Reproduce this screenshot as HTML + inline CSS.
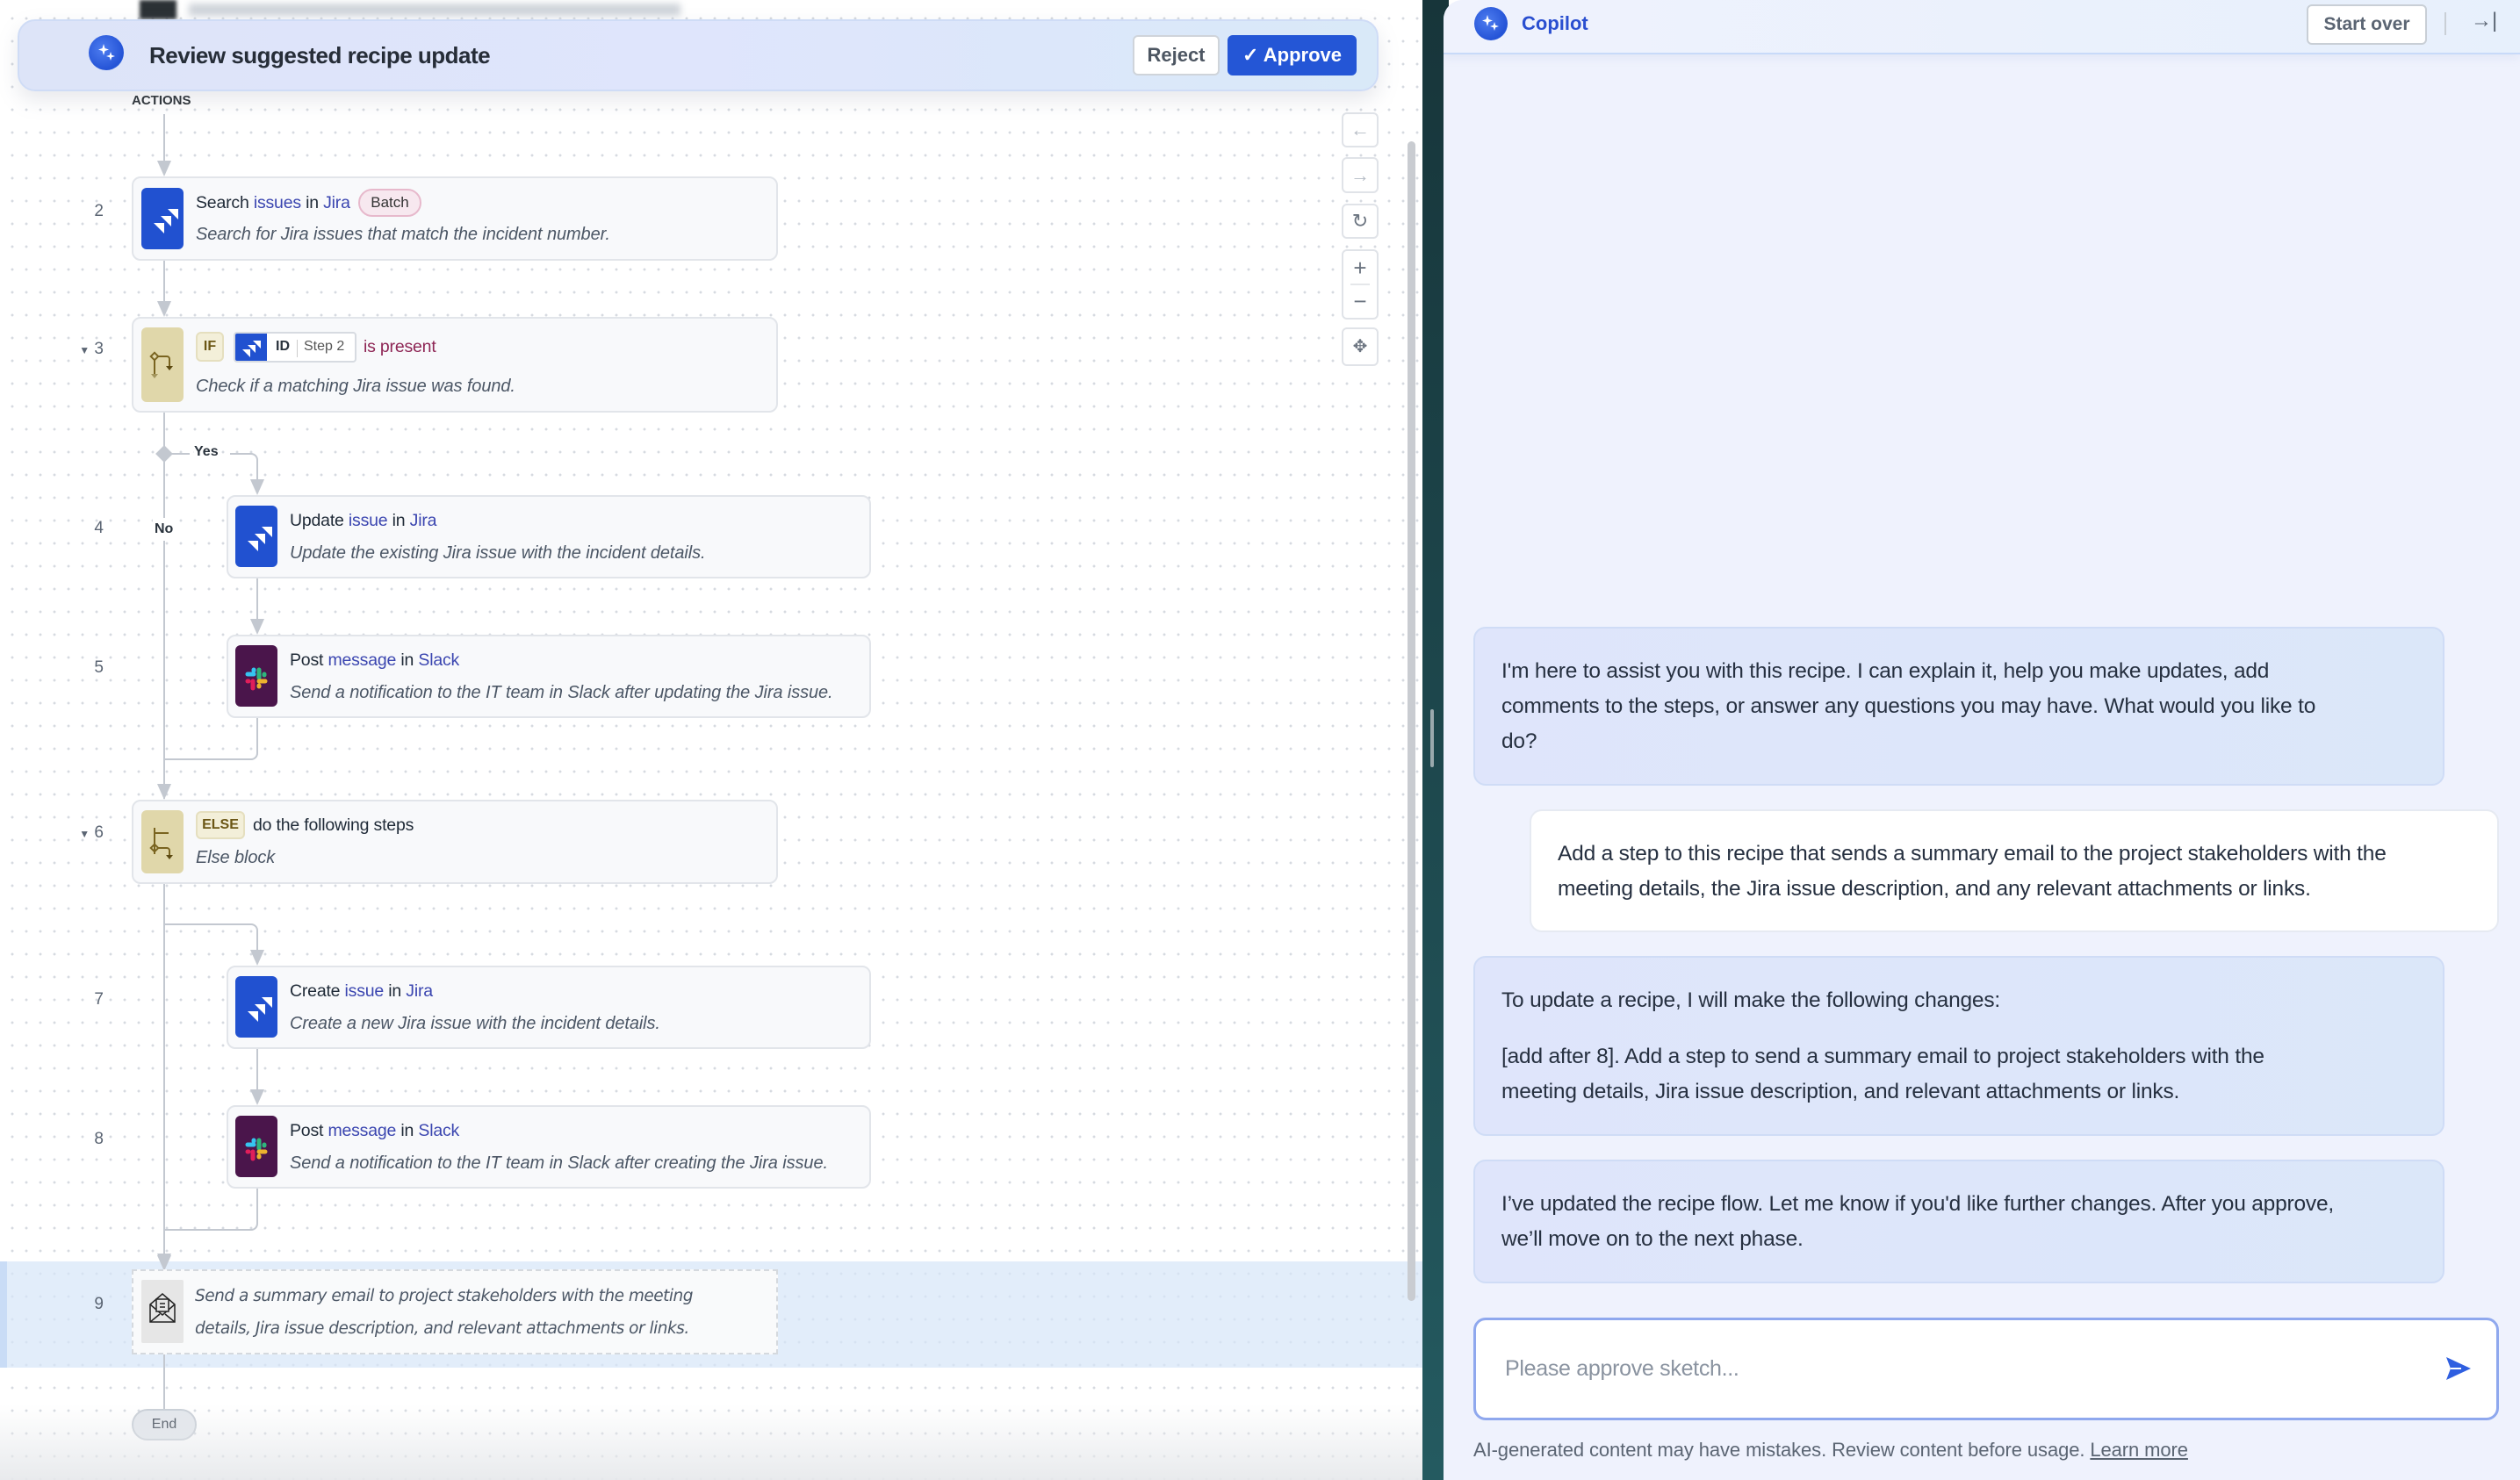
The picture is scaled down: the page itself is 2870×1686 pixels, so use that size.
<!DOCTYPE html>
<html><head><meta charset="utf-8">
<style>
*{box-sizing:border-box;margin:0;padding:0}
body{width:2870px;height:1686px;overflow:hidden;position:relative;font-family:"Liberation Sans",sans-serif;background:#fff;color:#1f2a37}
.abs{position:absolute}
#left{position:absolute;left:0;top:0;width:1620px;height:1686px;background-color:#fff;
 background-image:radial-gradient(circle,#d6dae0 1.3px,transparent 1.6px);background-size:16px 26px;background-position:6px 8px;overflow:hidden}
.vl{position:absolute;background:#c3c8d0;width:2px}
.hl{position:absolute;background:#c3c8d0;height:2px}
.arr{position:absolute;width:0;height:0;border-left:8px solid transparent;border-right:8px solid transparent;border-top:18px solid #c3c8d0}
.card{position:absolute;background:#f8f9fb;border:2px solid #e2e5ea;border-radius:10px}
.num{position:absolute;font-size:19px;color:#5b6573;width:40px;text-align:right}
.ico{position:absolute;border-radius:6px}
.t{position:absolute;font-size:19.5px;color:#1f2a37;white-space:nowrap;letter-spacing:-0.2px}
.t b{font-weight:normal;color:#3b46b0}
.d{position:absolute;font-size:20px;font-style:italic;color:#4c5766;white-space:nowrap;letter-spacing:-0.1px}
.jira{background:#2151d0}
.slack{background:#4a154b}
.tan{background:#e0d7aa}
.ctl{position:absolute;left:1528px;width:42px;background:#fff;border:2px solid #e0e3e8;border-radius:6px;color:#6b7480;text-align:center;font-size:22px}
#right{position:absolute;left:1644px;top:0;width:1226px;height:1686px;background:#eff2fd;border-top-left-radius:22px;overflow:hidden}
.bub{position:absolute;border-radius:14px;background:linear-gradient(90deg,#dfe5fb,#dbe7f9);border:2px solid #cfdcf6;font-size:24.5px;line-height:40px;color:#263040;letter-spacing:-0.2px;padding:0 0 0 30px;white-space:nowrap}
</style></head><body>
<div id="left">
 <div class="abs" style="left:159px;top:0;width:42px;height:22px;background:#2b3135;filter:blur(2px)"></div>
 <div class="abs" style="left:215px;top:4px;width:560px;height:14px;background:#cfd4da;filter:blur(4px)"></div>
 <div class="abs" style="left:150px;top:106px;font-size:15px;font-weight:bold;color:#2b3135">ACTIONS</div>

 <div class="vl" style="left:186px;top:130px;height:62px"></div><div class="arr" style="left:179px;top:183px"></div>
 <div class="vl" style="left:186px;top:297px;height:56px"></div><div class="arr" style="left:179px;top:343px"></div>
 <div class="vl" style="left:186px;top:470px;height:440px"></div><div class="arr" style="left:179px;top:893px"></div>
 <div class="abs" style="left:180px;top:510px;width:14px;height:14px;background:#c3c8d0;transform:rotate(45deg)"></div>
 <div class="hl" style="left:194px;top:516px;width:22px"></div>
 <div class="abs" style="left:221px;top:506px;font-size:16px;font-weight:bold;color:#2a333d;background:#fff">Yes</div>
 <div class="hl" style="left:262px;top:516px;width:24px"></div>
 <div class="abs" style="left:284px;top:516px;width:10px;height:10px;border-top:2px solid #c3c8d0;border-right:2px solid #c3c8d0;border-top-right-radius:8px"></div>
 <div class="vl" style="left:292px;top:524px;height:34px"></div><div class="arr" style="left:285px;top:546px"></div>
 <div class="abs" style="left:174px;top:590px;font-size:16px;font-weight:bold;color:#2a333d;background:#fff;padding:4px 2px">No</div>
 <div class="vl" style="left:292px;top:659px;height:56px"></div><div class="arr" style="left:285px;top:705px"></div>
 <div class="vl" style="left:292px;top:818px;height:38px"></div>
 <div class="abs" style="left:186px;top:854px;width:108px;height:12px;border-bottom:2px solid #c3c8d0;border-right:2px solid #c3c8d0;border-bottom-right-radius:8px"></div>

 <div class="vl" style="left:186px;top:1007px;height:435px"></div><div class="arr" style="left:179px;top:1428px"></div>
 <div class="abs" style="left:186px;top:1052px;width:108px;height:12px;border-top:2px solid #c3c8d0;border-right:2px solid #c3c8d0;border-top-right-radius:8px"></div>
 <div class="vl" style="left:292px;top:1062px;height:30px"></div><div class="arr" style="left:285px;top:1082px"></div>
 <div class="vl" style="left:292px;top:1195px;height:56px"></div><div class="arr" style="left:285px;top:1241px"></div>
 <div class="vl" style="left:292px;top:1354px;height:38px"></div>
 <div class="abs" style="left:186px;top:1390px;width:108px;height:12px;border-bottom:2px solid #c3c8d0;border-right:2px solid #c3c8d0;border-bottom-right-radius:8px"></div>

 <div class="abs" style="left:0;top:1437px;width:1620px;height:121px;background:rgba(214,230,248,0.7);border-left:8px solid #c9dcf6"></div>
 <div class="vl" style="left:186px;top:1400px;height:42px"></div><div class="arr" style="left:179px;top:1430px"></div>
 <div class="vl" style="left:186px;top:1543px;height:64px"></div>

 <!-- step 2 -->
 <div class="num" style="left:78px;top:230px">2</div>
 <div class="card" style="left:150px;top:201px;width:736px;height:96px"></div>
 <div class="ico jira" style="left:161px;top:214px;width:48px;height:70px"><svg width="48" height="70" viewBox="0 0 48 70"><g fill="#fff"><path d="M30 24h12v12l-5-5z"/><path d="M22 32h12v12l-5-5z"/><path d="M14 40h12v12l-5-5z"/></g></svg></div>
 <div class="t" style="left:223px;top:220px">Search <b>issues</b> in <b>Jira</b></div>
 <div class="abs" style="left:408px;top:215px;width:72px;height:32px;border:2px solid #e7b9cc;background:#f7e8ef;border-radius:16px;font-size:17px;text-align:center;line-height:28px;color:#333">Batch</div>
 <div class="d" style="left:223px;top:256px">Search for Jira issues that match the incident number.</div>

 <!-- step 3 -->
 <div class="num" style="left:78px;top:387px"><span style="font-size:12px">▼</span> 3</div>
 <div class="card" style="left:150px;top:361px;width:736px;height:109px"></div>
 <div class="ico tan" style="left:161px;top:373px;width:48px;height:85px"><svg width="48" height="85" viewBox="0 0 48 85"><g stroke="#7a6420" stroke-width="2" fill="none"><path d="M15 37v16"/><path d="M19 33h10a3 3 0 0 1 3 3v8"/><rect x="12" y="30" width="6" height="6" transform="rotate(45 15 33)"/></g><path d="M28 44h8l-4 5z" fill="#5c4a12"/><path d="M11 53h8l-4 5z" fill="#a3955d"/></svg></div>
 <div class="abs" style="left:223px;top:378px;width:32px;height:34px;background:#f3efd9;border:2px solid #e5dfbf;border-radius:6px;font-size:16px;font-weight:bold;color:#6b5615;text-align:center;line-height:30px">IF</div>
 <div class="abs" style="left:266px;top:378px;width:140px;height:35px;background:#fff;border:2px solid #d7dbe1;border-radius:4px;overflow:hidden">
  <div class="abs jira" style="left:0;top:0;width:36px;height:33px"><svg width="36" height="33"><g fill="#fff"><path d="M20 8h9v9l-4-4z"/><path d="M14 13h9v9l-4-4z"/><path d="M8 18h9v9l-4-4z"/></g></svg></div>
  <div class="abs" style="left:46px;top:6px;font-size:16px;font-weight:bold;color:#2a333d">ID</div>
  <div class="abs" style="left:70px;top:7px;width:1px;height:20px;background:#ccc"></div>
  <div class="abs" style="left:78px;top:6px;font-size:16px;color:#555">Step 2</div>
 </div>
 <div class="t" style="left:414px;top:384px;color:#8e2655">is present</div>
 <div class="d" style="left:223px;top:429px">Check if a matching Jira issue was found.</div>

 <!-- step 4 -->
 <div class="num" style="left:78px;top:591px">4</div>
 <div class="card" style="left:258px;top:564px;width:734px;height:95px"></div>
 <div class="ico jira" style="left:268px;top:576px;width:48px;height:70px"><svg width="48" height="70" viewBox="0 0 48 70"><g fill="#fff"><path d="M30 24h12v12l-5-5z"/><path d="M22 32h12v12l-5-5z"/><path d="M14 40h12v12l-5-5z"/></g></svg></div>
 <div class="t" style="left:330px;top:582px">Update <b>issue</b> in <b>Jira</b></div>
 <div class="d" style="left:330px;top:619px">Update the existing Jira issue with the incident details.</div>

 <!-- step 5 -->
 <div class="num" style="left:78px;top:750px">5</div>
 <div class="card" style="left:258px;top:723px;width:734px;height:95px"></div>
 <div class="ico slack" style="left:268px;top:735px;width:48px;height:70px"><svg width="48" height="70" viewBox="0 0 48 70"><g stroke-linecap="round" stroke-width="5"><path d="M14 33h7" stroke="#36c5f0"/><path d="M21 28v1" stroke="#36c5f0"/><path d="M27 28v9" stroke="#2eb67d"/><path d="M33 33v1" stroke="#2eb67d"/><path d="M27 41h7" stroke="#ecb22e"/><path d="M27 46v1" stroke="#ecb22e"/><path d="M20 41v8" stroke="#e01e5a"/><path d="M14 41h1" stroke="#e01e5a"/></g></svg></div>
 <div class="t" style="left:330px;top:741px">Post <b>message</b> in <b>Slack</b></div>
 <div class="d" style="left:330px;top:778px">Send a notification to the IT team in Slack after updating the Jira issue.</div>

 <!-- step 6 -->
 <div class="num" style="left:78px;top:938px"><span style="font-size:12px">▼</span> 6</div>
 <div class="card" style="left:150px;top:911px;width:736px;height:96px"></div>
 <div class="ico tan" style="left:161px;top:923px;width:48px;height:72px"><svg width="48" height="72" viewBox="0 0 48 72"><g stroke="#7a6420" stroke-width="2" fill="none"><path d="M15 20v30"/><path d="M15 26h16"/><path d="M19 43h10a3 3 0 0 1 3 3v5"/><rect x="12" y="40" width="6" height="6" transform="rotate(45 15 43)"/></g><path d="M28 51h8l-4 5z" fill="#5c4a12"/></svg></div>
 <div class="abs" style="left:223px;top:924px;width:56px;height:32px;background:#f3efd9;border:2px solid #e5dfbf;border-radius:6px;font-size:16px;font-weight:bold;color:#6b5615;text-align:center;line-height:28px">ELSE</div>
 <div class="t" style="left:288px;top:929px">do the following steps</div>
 <div class="d" style="left:223px;top:966px">Else block</div>

 <!-- step 7 -->
 <div class="num" style="left:78px;top:1128px">7</div>
 <div class="card" style="left:258px;top:1100px;width:734px;height:95px"></div>
 <div class="ico jira" style="left:268px;top:1112px;width:48px;height:70px"><svg width="48" height="70" viewBox="0 0 48 70"><g fill="#fff"><path d="M30 24h12v12l-5-5z"/><path d="M22 32h12v12l-5-5z"/><path d="M14 40h12v12l-5-5z"/></g></svg></div>
 <div class="t" style="left:330px;top:1118px">Create <b>issue</b> in <b>Jira</b></div>
 <div class="d" style="left:330px;top:1155px">Create a new Jira issue with the incident details.</div>

 <!-- step 8 -->
 <div class="num" style="left:78px;top:1287px">8</div>
 <div class="card" style="left:258px;top:1259px;width:734px;height:95px"></div>
 <div class="ico slack" style="left:268px;top:1271px;width:48px;height:70px"><svg width="48" height="70" viewBox="0 0 48 70"><g stroke-linecap="round" stroke-width="5"><path d="M14 33h7" stroke="#36c5f0"/><path d="M21 28v1" stroke="#36c5f0"/><path d="M27 28v9" stroke="#2eb67d"/><path d="M33 33v1" stroke="#2eb67d"/><path d="M27 41h7" stroke="#ecb22e"/><path d="M27 46v1" stroke="#ecb22e"/><path d="M20 41v8" stroke="#e01e5a"/><path d="M14 41h1" stroke="#e01e5a"/></g></svg></div>
 <div class="t" style="left:330px;top:1277px">Post <b>message</b> in <b>Slack</b></div>
 <div class="d" style="left:330px;top:1314px">Send a notification to the IT team in Slack after creating the Jira issue.</div>

 <!-- step 9 -->
 <div class="num" style="left:78px;top:1475px">9</div>
 <div class="abs" style="left:150px;top:1446px;width:736px;height:97px;background:#f9fafb;border:2px dashed #d5d9de"></div>
 <div class="abs" style="left:161px;top:1458px;width:48px;height:72px;background:#e6e6e6;border-radius:2px"><svg width="48" height="72"><g stroke="#222" stroke-width="1.5" fill="none"><path d="M10 28l14 -12l14 12v20h-28z"/><path d="M10 28l14 12l14-12"/><path d="M10 48l11-9M38 48l-11-9"/><rect x="17" y="22" width="14" height="14" fill="#e6e6e6"/><path d="M21 27h6M21 31h6"/></g></svg></div>
 <div class="abs" style="left:222px;top:1458px;font-family:'DejaVu Sans',sans-serif;font-style:italic;font-size:18.5px;color:#4c5766;line-height:37px;white-space:nowrap;letter-spacing:-0.5px">Send a summary email to project stakeholders with the meeting<br>details, Jira issue description, and relevant attachments or links.</div>

 <div class="abs" style="left:150px;top:1605px;width:74px;height:36px;background:#e3e7ec;border:2px solid #c8ced6;border-radius:18px;font-size:16px;color:#3d4652;text-align:center;line-height:32px">End</div>
 <div class="abs" style="left:0;top:1600px;width:1620px;height:86px;background:linear-gradient(rgba(255,255,255,0),rgba(230,232,235,0.9))"></div>

 <div class="ctl" style="top:128px;height:40px;line-height:36px;color:#b5bcc5">←</div>
 <div class="ctl" style="top:179px;height:41px;line-height:37px;color:#b5bcc5">→</div>
 <div class="ctl" style="top:232px;height:40px;line-height:36px">↻</div>
 <div class="ctl" style="top:284px;height:80px;line-height:38px;font-size:26px">+<br>−</div>
 <div class="abs" style="left:1538px;top:323px;width:22px;height:2px;background:#e5e7ea"></div>
 <div class="ctl" style="top:373px;height:44px;line-height:40px;font-size:20px">✥</div>
 <div class="abs" style="left:1603px;top:161px;width:9px;height:1321px;background:#c9ccd1;border-radius:5px"></div>

 <div class="abs" style="left:20px;top:22px;width:1550px;height:82px;border-radius:20px;background:linear-gradient(90deg,#dde4f8,#dfe5fc 50%,#d9e9f8);border:2px solid #cfdcf6;box-shadow:0 10px 24px rgba(120,130,150,0.18)"></div>
 <div class="abs" style="left:101px;top:40px;width:40px;height:40px;border-radius:50%;background:radial-gradient(circle at 40% 40%,#4e7df0,#2453d6 70%,#5aa0f0)"><svg width="40" height="40"><g fill="#fff"><path d="M17 10l1.5 5 4.5 1.5-4.5 1.5-1.5 5-1.5-5-4.5-1.5 4.5-1.5z"/><path d="M25 19l1.2 3.8 3.8 1.2-3.8 1.2-1.2 3.8-1.2-3.8-3.8-1.2 3.8-1.2z"/></g></svg></div>
 <div class="abs" style="left:170px;top:48px;font-size:26px;font-weight:bold;color:#262d38;letter-spacing:-0.5px">Review suggested recipe update</div>
 <div class="abs" style="left:1290px;top:40px;width:99px;height:46px;background:#fff;border:2px solid #cfd4da;border-radius:6px;font-size:22px;font-weight:bold;color:#4d5662;text-align:center;line-height:42px">Reject</div>
 <div class="abs" style="left:1398px;top:40px;width:147px;height:46px;background:#2456d6;border-radius:6px;font-size:22px;font-weight:bold;color:#fff;text-align:center;line-height:46px">✓ Approve</div>
</div>

<div class="abs" style="left:1620px;top:0;width:30px;height:1686px;background:linear-gradient(#17353a,#245a60)"></div>
<div class="abs" style="left:1629px;top:808px;width:4px;height:66px;background:#9aa9ad;border-radius:2px"></div>

<div id="right">
 <div class="abs" style="left:0;top:0;width:1226px;height:62px;background:linear-gradient(90deg,#eff2fd,#e7f0fc);border-bottom:2px solid #c8daf9;box-shadow:0 4px 10px rgba(150,170,210,0.15)"></div>
 <div class="abs" style="left:35px;top:8px;width:38px;height:38px;border-radius:50%;background:radial-gradient(circle at 40% 40%,#4e7df0,#2453d6 70%,#5aa0f0)"><svg width="38" height="38"><g fill="#fff"><path d="M15 9l1.5 5 4.5 1.5-4.5 1.5-1.5 5-1.5-5-4.5-1.5 4.5-1.5z"/><path d="M23 17l1.2 3.8 3.8 1.2-3.8 1.2-1.2 3.8-1.2-3.8-3.8-1.2 3.8-1.2z"/></g></svg></div>
 <div class="abs" style="left:89px;top:14px;font-size:22px;font-weight:bold;color:#2a4fd0">Copilot</div>
 <div class="abs" style="left:983px;top:5px;width:137px;height:46px;background:#fff;border:2px solid #c9cfd6;border-radius:6px;font-size:21px;font-weight:bold;color:#5b6573;text-align:center;line-height:42px">Start over</div>
 <div class="abs" style="left:1140px;top:14px;width:2px;height:26px;background:#c9cfd6"></div>
 <div class="abs" style="left:1170px;top:10px;font-size:24px;color:#5b6573">→|</div>

 <div class="bub" style="left:34px;top:714px;width:1106px;height:181px;padding-top:29px">I'm here to assist you with this recipe. I can explain it, help you make updates, add<br>comments to the steps, or answer any questions you may have. What would you like to<br>do?</div>
 <div class="bub" style="left:98px;top:922px;width:1104px;height:140px;padding-top:29px;background:#fff;border-color:#e6eaf2">Add a step to this recipe that sends a summary email to the project stakeholders with the<br>meeting details, the Jira issue description, and any relevant attachments or links.</div>
 <div class="bub" style="left:34px;top:1089px;width:1106px;height:205px;padding-top:29px">To update a recipe, I will make the following changes:<div style="height:24px"></div>[add after 8]. Add a step to send a summary email to project stakeholders with the<br>meeting details, Jira issue description, and relevant attachments or links.</div>
 <div class="bub" style="left:34px;top:1321px;width:1106px;height:141px;padding-top:29px">I’ve updated the recipe flow. Let me know if you'd like further changes. After you approve,<br>we’ll move on to the next phase.</div>

 <div class="abs" style="left:34px;top:1501px;width:1168px;height:117px;background:#fff;border:3px solid #8fa8ee;border-radius:14px"></div>
 <div class="abs" style="left:70px;top:1545px;font-size:25px;color:#8a93a0;letter-spacing:-0.3px">Please approve sketch...</div>
 <svg class="abs" style="left:1140px;top:1544px" width="32" height="30"><path d="M2 2l28 13-28 13 5-13z" fill="#2f5fe0"/><path d="M7 15h12" stroke="#fff" stroke-width="2"/></svg>
 <div class="abs" style="left:34px;top:1639px;font-size:22px;color:#5b6573;letter-spacing:-0.1px">AI-generated content may have mistakes. Review content before usage. <u>Learn more</u></div>
</div>
</body></html>
